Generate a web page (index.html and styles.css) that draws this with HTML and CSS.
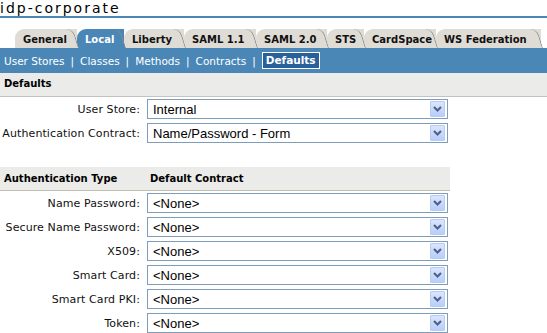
FILE: index.html
```html
<!DOCTYPE html>
<html>
<head>
<meta charset="utf-8">
<link rel="stylesheet" href="styles.css">
</head>
<body>
<div class="title">idp-corporate</div>
<div class="tabs">
  <div class="tab w-general"><span class="tl">General</span></div>
  <div class="tab active w-local"><span class="tl">Local</span></div>
  <div class="tab w-liberty"><span class="tl">Liberty</span></div>
  <div class="tab w-saml1"><span class="tl">SAML 1.1</span></div>
  <div class="tab w-saml2"><span class="tl">SAML 2.0</span></div>
  <div class="tab w-sts"><span class="tl">STS</span></div>
  <div class="tab w-card"><span class="tl">CardSpace</span></div>
  <div class="tab w-ws"><span class="tl">WS Federation</span></div>
</div>
<div class="subnav">
  <span class="link">User Stores</span><span class="sep">|</span>
  <span class="link">Classes</span><span class="sep">|</span>
  <span class="link">Methods</span><span class="sep">|</span>
  <span class="link">Contracts</span><span class="sep">|</span>
  <span class="link current">Defaults</span>
</div>
<div class="section-head">Defaults</div>
<div class="form">
  <div class="row">
    <label class="lbl">User Store:</label>
    <div class="select"><span class="val">Internal</span><span class="btn"><svg width="9" height="6" viewBox="0 0 9 6"><path d="M1 1 L4.5 4.5 L8 1" fill="none" stroke="#4d6185" stroke-width="2"/></svg></span></div>
  </div>
  <div class="row">
    <label class="lbl">Authentication Contract:</label>
    <div class="select"><span class="val">Name/Password - Form</span><span class="btn"><svg width="9" height="6" viewBox="0 0 9 6"><path d="M1 1 L4.5 4.5 L8 1" fill="none" stroke="#4d6185" stroke-width="2"/></svg></span></div>
  </div>
</div>
<div class="table-head"><span class="th1">Authentication Type</span><span class="th2">Default Contract</span></div>
<div class="form form2">
  <div class="row">
    <label class="lbl">Name Password:</label>
    <div class="select"><span class="val">&lt;None&gt;</span><span class="btn"><svg width="9" height="6" viewBox="0 0 9 6"><path d="M1 1 L4.5 4.5 L8 1" fill="none" stroke="#4d6185" stroke-width="2"/></svg></span></div>
  </div>
  <div class="row">
    <label class="lbl">Secure Name Password:</label>
    <div class="select"><span class="val">&lt;None&gt;</span><span class="btn"><svg width="9" height="6" viewBox="0 0 9 6"><path d="M1 1 L4.5 4.5 L8 1" fill="none" stroke="#4d6185" stroke-width="2"/></svg></span></div>
  </div>
  <div class="row">
    <label class="lbl">X509:</label>
    <div class="select"><span class="val">&lt;None&gt;</span><span class="btn"><svg width="9" height="6" viewBox="0 0 9 6"><path d="M1 1 L4.5 4.5 L8 1" fill="none" stroke="#4d6185" stroke-width="2"/></svg></span></div>
  </div>
  <div class="row">
    <label class="lbl">Smart Card:</label>
    <div class="select"><span class="val">&lt;None&gt;</span><span class="btn"><svg width="9" height="6" viewBox="0 0 9 6"><path d="M1 1 L4.5 4.5 L8 1" fill="none" stroke="#4d6185" stroke-width="2"/></svg></span></div>
  </div>
  <div class="row">
    <label class="lbl">Smart Card PKI:</label>
    <div class="select"><span class="val">&lt;None&gt;</span><span class="btn"><svg width="9" height="6" viewBox="0 0 9 6"><path d="M1 1 L4.5 4.5 L8 1" fill="none" stroke="#4d6185" stroke-width="2"/></svg></span></div>
  </div>
  <div class="row">
    <label class="lbl">Token:</label>
    <div class="select"><span class="val">&lt;None&gt;</span><span class="btn"><svg width="9" height="6" viewBox="0 0 9 6"><path d="M1 1 L4.5 4.5 L8 1" fill="none" stroke="#4d6185" stroke-width="2"/></svg></span></div>
  </div>
</div>
</body>
</html>
```

FILE: styles.css
```css
html, body {
  margin: 0;
  padding: 0;
  background: #fff;
  overflow: hidden;
}
body {
  font-family: "DejaVu Sans", Verdana, sans-serif;
  font-size: 10px;
  color: #000;
  width: 547px;
  height: 333px;
}
.title {
  height: 16px;
  line-height: 16px;
  font-size: 14px;
  letter-spacing: 2px;
  border-bottom: 2px solid #4a87b7;
}
.tabs {
  display: flex;
  margin-top: 11px;
  padding-left: 15px;
  height: 19px;
}
.tab {
  position: relative;
  box-sizing: border-box;
  height: 19px;
  line-height: 21px;
  font-weight: bold;
  font-size: 10px;
  background: #dfdcd6;
  border-top-left-radius: 9px;
  padding-left: 8px;
  color: #111;
  white-space: nowrap;
}
.tl { position: relative; z-index: 3; }
.tab::after {
  content: "";
  position: absolute;
  top: 0;
  right: -2px;
  width: 10px;
  height: 19px;
  background: #dfdcd6;
  border-right: 1px solid #8c8c88;
  border-top-right-radius: 7px;
  transform: skewX(17deg);
  transform-origin: bottom right;
  z-index: 1;
}
.tab.active { background: #4a87b7; color: #fff; }
.tab.active::after { background: #4a87b7; }
.w-general { width: 62px; }
.w-local { width: 47px; }
.w-liberty { width: 60px; }
.w-saml1 { width: 72px; }
.w-saml2 { width: 71px; }
.w-sts { width: 37px; }
.w-card { width: 72px; }
.w-ws { width: 105px; }
.subnav {
  background: #4a87b7;
  height: 25px;
  display: flex;
  align-items: center;
  padding-left: 4px;
  color: #fff;
  font-size: 10.5px;
}
.sep { margin: 0 6px; }
.link.current {
  font-weight: bold;
  font-size: 10.5px;
  background: #2a609a;
  border: 1px solid #fff;
  padding: 1px 3px 2px;
}
.section-head {
  background: #ebebe9;
  height: 23px;
  line-height: 22px;
  padding-left: 4px;
  font-weight: bold;
  border-bottom: 1px solid #c3c3bf;
}
.form {
  display: flex;
  flex-direction: column;
  gap: 4px;
  padding-top: 2px;
}
.row {
  display: flex;
  align-items: center;
  height: 20px;
}
.lbl {
  width: 140px;
  text-align: right;
  padding-right: 7px;
  box-sizing: content-box;
  color: #111;
  font-size: 11px;
  letter-spacing: 0.1px;
  white-space: nowrap;
}
.select {
  box-sizing: border-box;
  width: 301px;
  height: 20px;
  border: 1px solid #7f9db9;
  display: flex;
  align-items: center;
  justify-content: space-between;
  padding: 0 2px 0 5px;
  font-family: "Liberation Sans", Arial, sans-serif;
  font-size: 13px;
  background: #fff;
}
.btn {
  width: 15px;
  height: 16px;
  box-sizing: border-box;
  border: 1px solid #b8cbf3;
  border-radius: 1px;
  background: linear-gradient(#dbe5fd, #b7cdfb);
  display: flex;
  align-items: center;
  justify-content: center;
}
.table-head {
  margin-top: 24px;
  width: 450px;
  height: 23px;
  background: #ebebe9;
  border-bottom: 1px solid #c3c0b2;
  display: flex;
  align-items: center;
  font-weight: bold;
}
.th1 { width: 150px; padding-left: 4px; box-sizing: border-box; }
.form2 { padding-top: 2px; }
```
